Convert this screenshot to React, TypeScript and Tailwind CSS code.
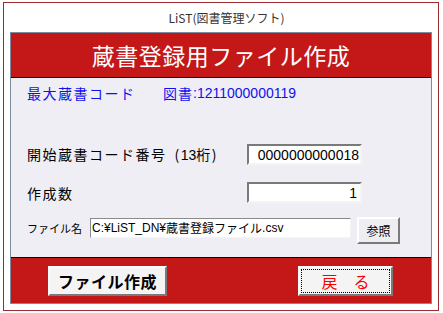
import React from "react";

const jp = { fontFamily: '"Noto Sans CJK JP", "Noto Sans", sans-serif' };
const num = { fontFamily: '"Liberation Sans", "Noto Sans CJK JP", sans-serif' };

export default function App() {
  return (
    <div className="w-[443px] h-[313px] bg-white overflow-hidden" style={jp}>
      <div className="ml-[3px] mt-[2px] w-[436px] h-[309px] border border-[#9b2b2e] flex flex-col">
        <div className="h-[29px] flex items-center justify-center pl-[11px] text-[12px] text-[#333] leading-none">
          LiST(図書管理ソフト)
        </div>
        <div className="ml-[6px] w-[422px] h-[272px] border border-[#7d8aa0] flex flex-col">
          <div className="h-[45px] bg-[#c41718] border-b border-black flex items-center justify-center text-white text-[23px] tracking-[0.5px] leading-none">
            蔵書登録用ファイル作成
          </div>
          <div className="h-[180px] bg-[#eeeef4] border-b border-black flex flex-col pl-[16px]">
            <div className="mt-[5px] h-[20px] flex items-center text-[#1010f0] text-[14px] leading-none">
              <span className="w-[136px] tracking-[1.5px]">最大蔵書コード</span>
              <span className="tracking-[1px]">図書</span>
              <span style={num} className="text-[14px]">:1211000000119</span>
            </div>
            <div className="mt-[41px] h-[21px] flex items-center text-[14px] text-black leading-none">
              <span className="w-[220px] tracking-[1.5px]">
                開始蔵書コード番号<span className="ml-[8px]">(</span>
                <span style={num} className="tracking-[0px]">13</span>桁)
              </span>
              <div
                style={num}
                className="w-[115px] h-[21px] bg-white border-2 border-t-[#7a7a7a] border-l-[#7a7a7a] border-b-[#f4f4f4] border-r-[#f4f4f4] flex items-center justify-end pr-[1px] text-[14px] text-black"
              >
                0000000000018
              </div>
            </div>
            <div className="mt-[17px] h-[21px] flex items-center text-[14px] text-black leading-none">
              <span className="w-[220px] tracking-[1.5px]">作成数</span>
              <div
                style={num}
                className="w-[115px] h-[21px] bg-white border-2 border-t-[#7a7a7a] border-l-[#7a7a7a] border-b-[#f4f4f4] border-r-[#f4f4f4] flex items-center justify-end pr-[3px] text-[14px] text-black"
              >
                1
              </div>
            </div>
            <div className="mt-[14px] flex items-start text-black leading-none">
              <span className="w-[63px] h-[20px] mt-[1px] flex items-center text-[11px] whitespace-nowrap">ファイル名</span>
              <div className="mt-[1px] w-[261px] h-[20px] bg-white border border-t-[#8a8a8a] border-l-[#8a8a8a] border-b-[#f4f4f4] border-r-[#f4f4f4] flex items-center pl-[1px] text-[12px] whitespace-nowrap">
                <span style={num}>C:¥LiST_DN¥</span>
                <span>蔵書登録ファイル</span>
                <span style={num}>.csv</span>
              </div>
              <div className="ml-[6px] w-[43px] h-[27px] bg-[#ededf2] border-2 border-t-white border-l-white border-b-[#7a7a7a] border-r-[#7a7a7a] flex items-center justify-center text-[12px]">
                参照
              </div>
            </div>
          </div>
          <div className="flex-1 bg-[#c41718] flex items-start pt-[8px] pl-[37px]">
            <div className="w-[119px] h-[30px] bg-[#f4f4f4] border-2 border-t-[#fafafa] border-l-[#fafafa] border-b-[#7a7a7a] border-r-[#7a7a7a] flex items-center justify-center text-[16px] font-bold tracking-[0.5px] text-black leading-none">
              ファイル作成
            </div>
            <div className="ml-[131px] w-[95px] h-[30px] bg-[#f4f4f4] border-2 border-t-[#fafafa] border-l-[#fafafa] border-b-[#7a7a7a] border-r-[#7a7a7a] p-[1px]">
              <div className="w-full h-full border border-dotted border-black flex items-center justify-center text-[16px] text-[#ff0000] leading-none">
                戻　る
              </div>
            </div>
          </div>
        </div>
      </div>
    </div>
  );
}
